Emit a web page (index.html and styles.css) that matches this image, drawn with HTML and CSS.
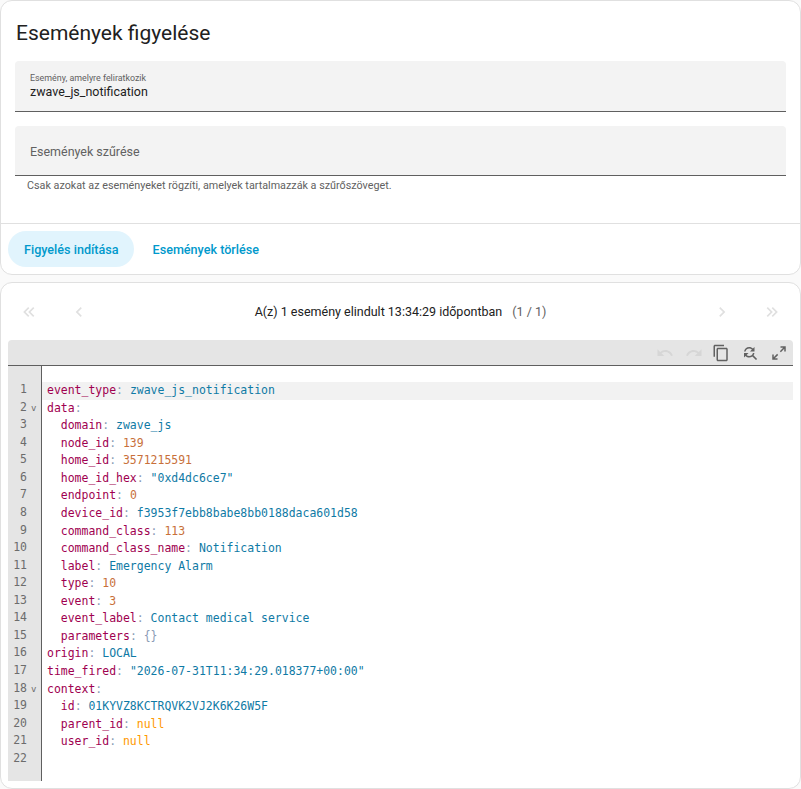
FILE: index.html
```html
<!DOCTYPE html>
<html lang="hu">
<head>
    <meta charset="UTF-8">
    <meta name="viewport" content="width=device-width, initial-scale=1.0">
    <title>Események figyelése</title>
    <link rel="stylesheet" href="styles.css">
</head>
<body>
    <section class="card listen-card">
        <h1 class="card-title">Események figyelése</h1>
        <div class="text-field filled">
            <span class="field-label">Esemény, amelyre feliratkozik</span>
            <span class="field-value">zwave_js_notification</span>
        </div>
        <div class="text-field empty">
            <span class="field-placeholder">Események szűrése</span>
        </div>
        <p class="helper-text">Csak azokat az eseményeket rögzíti, amelyek tartalmazzák a szűrőszöveget.</p>
        <div class="card-actions">
            <button class="btn btn-tonal">Figyelés indítása</button>
            <button class="btn btn-plain">Események törlése</button>
        </div>
    </section>

    <section class="card events-card">
        <div class="pager">
            <div class="pager-side">
                <svg class="pager-icon" viewBox="0 0 24 24"><path d="M18.41 7.41 17 6l-6 6 6 6 1.41-1.41L13.83 12zM12.41 7.41 11 6l-6 6 6 6 1.41-1.41L7.83 12z"/></svg>
                <svg class="pager-icon" viewBox="0 0 24 24"><path d="M15.41 7.41 14 6l-6 6 6 6 1.41-1.41L10.83 12z"/></svg>
            </div>
            <div class="pager-text">A(z) 1 esemény elindult 13:34:29 időpontban <span class="pager-count">(1 / 1)</span></div>
            <div class="pager-side">
                <svg class="pager-icon" viewBox="0 0 24 24"><path d="M8.59 16.59 10 18l6-6-6-6-1.41 1.41L13.17 12z"/></svg>
                <svg class="pager-icon" viewBox="0 0 24 24"><path d="M5.59 7.41 7 6l6 6-6 6-1.41-1.41L10.17 12zM11.59 7.41 13 6l6 6-6 6-1.41-1.41L16.17 12z"/></svg>
            </div>
        </div>

        <div class="editor">
            <div class="editor-toolbar">
                <svg class="tool-icon disabled" viewBox="0 0 24 24"><path d="M12.5 8c-2.65 0-5.05 1-6.9 2.6L2 7v9h9l-3.62-3.62C8.77 11.2 10.54 10.5 12.5 10.5c3.54 0 6.55 2.31 7.6 5.5l2.37-.78C21.08 11.03 17.15 8 12.5 8z"/></svg>
                <svg class="tool-icon disabled" viewBox="0 0 24 24"><path d="M18.4 10.6C16.55 9 14.15 8 11.5 8c-4.65 0-8.58 3.03-9.96 7.22L3.9 16c1.05-3.19 4.05-5.5 7.6-5.5 1.96 0 3.73.72 5.12 1.88L13 16h9V7z"/></svg>
                <svg class="tool-icon" viewBox="0 0 24 24"><path d="M16 1H4c-1.1 0-2 .9-2 2v14h2V3h12zm3 4H8c-1.1 0-2 .9-2 2v14c0 1.1.9 2 2 2h11c1.100 0 2-.9 2-2V7c0-1.100-.9-2-2-2zm0 16H8V7h11z"/></svg>
                <svg class="tool-icon" viewBox="0 0 24 24"><path d="M11 6c1.38 0 2.630.56 3.540 1.460L12 10h6V4l-2.050 2.050C14.680 4.780 12.930 4 11 4 7.470 4 4.570 6.610 4.080 10h2.020C6.560 7.720 8.580 6 11 6zm5.640 9.140c.660-.900 1.120-1.970 1.280-3.140H15.900c-.460 2.280-2.480 4-4.900 4-1.380 0-2.630-.560-3.540-1.460L10 12H4v6l2.050-2.050C7.320 17.220 9.070 18 11 18c1.550 0 2.980-.510 4.140-1.360L20 21.490 21.490 20z"/></svg>
                <svg class="tool-icon" viewBox="0 0 24 24"><path d="M10 21v-2H6.410l4.500-4.500-1.410-1.410-4.500 4.500V14H3v7zM14.500 10.910l4.500-4.500V10h2V3h-7v2h3.590l-4.500 4.500z"/></svg>
            </div>
            <div class="editor-body">
                <div class="gutter">
                    <div class="ln">1</div>
                    <div class="ln fold">2</div>
                    <div class="ln">3</div>
                    <div class="ln">4</div>
                    <div class="ln">5</div>
                    <div class="ln">6</div>
                    <div class="ln">7</div>
                    <div class="ln">8</div>
                    <div class="ln">9</div>
                    <div class="ln">10</div>
                    <div class="ln">11</div>
                    <div class="ln">12</div>
                    <div class="ln">13</div>
                    <div class="ln">14</div>
                    <div class="ln">15</div>
                    <div class="ln">16</div>
                    <div class="ln">17</div>
                    <div class="ln fold">18</div>
                    <div class="ln">19</div>
                    <div class="ln">20</div>
                    <div class="ln">21</div>
                    <div class="ln">22</div>
                </div>
                <div class="code">
                    <div class="line active"><span class="k">event_type</span><span class="p">:</span> <span class="s">zwave_js_notification</span></div>
                    <div class="line"><span class="k">data</span><span class="p">:</span></div>
                    <div class="line">  <span class="k">domain</span><span class="p">:</span> <span class="s">zwave_js</span></div>
                    <div class="line">  <span class="k">node_id</span><span class="p">:</span> <span class="n">139</span></div>
                    <div class="line">  <span class="k">home_id</span><span class="p">:</span> <span class="n">3571215591</span></div>
                    <div class="line">  <span class="k">home_id_hex</span><span class="p">:</span> <span class="s">"0xd4dc6ce7"</span></div>
                    <div class="line">  <span class="k">endpoint</span><span class="p">:</span> <span class="n">0</span></div>
                    <div class="line">  <span class="k">device_id</span><span class="p">:</span> <span class="s">f3953f7ebb8babe8bb0188daca601d58</span></div>
                    <div class="line">  <span class="k">command_class</span><span class="p">:</span> <span class="n">113</span></div>
                    <div class="line">  <span class="k">command_class_name</span><span class="p">:</span> <span class="s">Notification</span></div>
                    <div class="line">  <span class="k">label</span><span class="p">:</span> <span class="s">Emergency Alarm</span></div>
                    <div class="line">  <span class="k">type</span><span class="p">:</span> <span class="n">10</span></div>
                    <div class="line">  <span class="k">event</span><span class="p">:</span> <span class="n">3</span></div>
                    <div class="line">  <span class="k">event_label</span><span class="p">:</span> <span class="s">Contact medical service</span></div>
                    <div class="line">  <span class="k">parameters</span><span class="p">:</span> <span class="p">{}</span></div>
                    <div class="line"><span class="k">origin</span><span class="p">:</span> <span class="s">LOCAL</span></div>
                    <div class="line"><span class="k">time_fired</span><span class="p">:</span> <span class="s">"2026-07-31T11:34:29.018377+00:00"</span></div>
                    <div class="line"><span class="k">context</span><span class="p">:</span></div>
                    <div class="line">  <span class="k">id</span><span class="p">:</span> <span class="s">01KYVZ8KCTRQVK2VJ2K6K26W5F</span></div>
                    <div class="line">  <span class="k">parent_id</span><span class="p">:</span> <span class="c">null</span></div>
                    <div class="line">  <span class="k">user_id</span><span class="p">:</span> <span class="c">null</span></div>
                    <div class="line"> </div>
                </div>
            </div>
        </div>
    </section>
</body>
</html>
```

FILE: styles.css
```css
:root {
    --primary-color: #03a9f4;
    --action-color: #0099cc;
    --text-color: #212121;
    --muted-color: #616161;
    --divider-color: #e0e0e0;
    --field-bg: #f3f3f3;
    --editor-bar: #e5e5e5;
}

* {
    box-sizing: border-box;
}

html,
body {
    height: 100%;
}

body {
    margin: 0;
    font-family: Roboto, "Liberation Sans", sans-serif;
    color: var(--text-color);
    background-color: #fafafa;
    overflow: hidden;
}

.card {
    background: white;
    border: 1px solid var(--divider-color);
    border-radius: 12px;
}

.listen-card {
    height: 275px;
    margin-bottom: 7px;
    position: relative;
}

.card-title {
    margin: 0;
    padding: 18px 15px 0;
    height: 60px;
    font-size: 21px;
    line-height: 28px;
    font-weight: 400;
}

.text-field {
    margin: 0 14px;
    background: var(--field-bg);
    border-bottom: 1px solid #5f5f5f;
    border-radius: 4px 4px 0 0;
    padding: 0 15px;
}

.text-field.filled {
    height: 51px;
    margin-bottom: 14px;
    padding-top: 11px;
}

.text-field.empty {
    height: 50px;
    display: flex;
    align-items: center;
    padding-top: 2px;
}

.field-label {
    display: block;
    font-size: 8.9px;
    line-height: 12px;
    color: var(--muted-color);
}

.field-value {
    display: block;
    font-size: 12.46px;
    line-height: 16px;
    color: var(--text-color);
}

.field-placeholder {
    font-size: 12.46px;
    color: var(--muted-color);
}

.helper-text {
    margin: 0;
    padding: 4px 26px 0;
    font-size: 10.78px;
    line-height: 12px;
    color: var(--muted-color);
}

.card-actions {
    position: absolute;
    left: 0;
    right: 0;
    bottom: 0;
    height: 51px;
    border-top: 1px solid var(--divider-color);
    display: flex;
    align-items: center;
    padding: 0 7px;
    gap: 3px;
}

.btn {
    height: 36px;
    border: none;
    border-radius: 18px;
    padding: 0 16px;
    background: transparent;
    color: var(--action-color);
    font-family: inherit;
    font-size: 12.6px;
    font-weight: 500;
}

.btn-tonal {
    padding-right: 15px;
    background: #e1f4fd;
}

.events-card {
    height: 507px;
    padding: 0 7px;
}

.pager {
    height: 57px;
    display: flex;
    align-items: center;
    justify-content: space-between;
}

.pager-side {
    display: flex;
    gap: 30px;
    padding: 0 11px;
}

.pager-icon {
    width: 20px;
    height: 20px;
    fill: #e0e0e0;
}

.pager-text {
    font-size: 12.5px;
    white-space: nowrap;
}

.pager-count {
    color: var(--muted-color);
    margin-left: 7px;
}

.editor {
    height: 441px;
    background: var(--editor-bar);
    border-radius: 4px 4px 0 0;
    display: flex;
    flex-direction: column;
}

.editor-toolbar {
    height: 26px;
    flex: none;
    border-bottom: 1px solid #5f5f5f;
    display: flex;
    align-items: center;
    justify-content: flex-end;
    gap: 11px;
    padding-right: 5px;
}

.tool-icon {
    width: 18px;
    height: 18px;
    fill: #616161;
}

.tool-icon.disabled {
    fill: #d6d6d6;
}

.tool-icon.disabled + .tool-icon.disabled {
    margin-right: -2px;
}

.editor-body {
    flex: 1;
    display: flex;
    min-height: 0;
    font-family: "DejaVu Sans Mono", monospace;
    font-size: 11.47px;
    line-height: 17.57px;
}

.gutter {
    width: 34px;
    flex: none;
    padding-top: 15px;
    border-right: 1px solid #5f5f5f;
    color: #6c6c6c;
}

.ln {
    padding-right: 14px;
    text-align: right;
    position: relative;
}

.ln.fold::after {
    content: "v";
    position: absolute;
    left: 23px;
    top: 1px;
    font-size: 9px;
}

.code {
    flex: 1;
    background: white;
    padding-top: 16px;
    color: #000;
}

.line {
    height: 17.57px;
    padding-left: 5px;
    white-space: pre;
}

.line.active {
    background: #f2f2f2;
}

.k {
    color: #a00050;
}

.p {
    color: #8a9bb5;
}

.s {
    color: #0f7aa5;
}

.n {
    color: #c8703a;
}

.c {
    color: #ff9800;
}
```
